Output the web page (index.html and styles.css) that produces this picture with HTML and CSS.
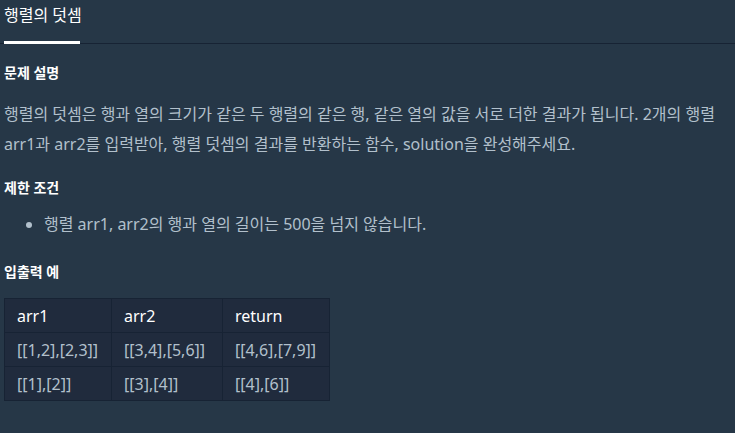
FILE: index.html
```html
<!DOCTYPE html>
<html lang="ko">
<head>
    <meta charset="UTF-8">
    <title>행렬의 덧셈</title>
    <link rel="stylesheet" href="styles.css">
</head>
<body>
    <div class="tabs">
        <div class="tab active">행렬의 덧셈</div>
    </div>
    <div class="guide">
        <h6>문제 설명</h6>
        <p>행렬의 덧셈은 행과 열의 크기가 같은 두 행렬의 같은 행, 같은 열의 값을 서로 더한 결과가 됩니다. 2개의 행렬 arr1과 arr2를 입력받아, 행렬 덧셈의 결과를 반환하는 함수, solution을 완성해주세요.</p>

        <h5>제한 조건</h5>
        <ul>
            <li>행렬 arr1, arr2의 행과 열의 길이는 500을 넘지 않습니다.</li>
        </ul>

        <h5>입출력 예</h5>
        <table>
            <colgroup>
                <col class="col-a">
                <col class="col-b">
                <col class="col-c">
            </colgroup>
            <thead>
                <tr>
                    <th>arr1</th>
                    <th>arr2</th>
                    <th>return</th>
                </tr>
            </thead>
            <tbody>
                <tr>
                    <td>[[1,2],[2,3]]</td>
                    <td>[[3,4],[5,6]]</td>
                    <td>[[4,6],[7,9]]</td>
                </tr>
                <tr>
                    <td>[[1],[2]]</td>
                    <td>[[3],[4]]</td>
                    <td>[[4],[6]]</td>
                </tr>
            </tbody>
        </table>
    </div>
</body>
</html>
```

FILE: styles.css
```css
body {
    margin: 0;
    padding: 0;
    background-color: #263747;
    color: #b2c0cc;
    font-family: 'Noto Sans', 'Noto Sans CJK KR', sans-serif;
    font-size: 16px;
}

.tabs {
    display: flex;
    border-bottom: 1px solid #172334;
    padding-left: 4px;
}

.tab {
    color: #fff;
    font-size: 16px;
    line-height: 20px;
    padding: 5px 0 16px;
    border-bottom: 3px solid #fff;
    margin-bottom: -1px;
    white-space: nowrap;
    width: 76px;
}

.guide {
    padding: 0 4px;
}

h5, h6 {
    color: #fff;
    font-size: 14px;
    font-weight: 700;
    margin: 0;
    line-height: 20px;
}

h6 {
    padding-top: 19px;
}

h5 {
    padding-top: 4px;
}

p {
    margin: 16px 0 15px;
    line-height: 30px;
}

ul {
    margin: 11px 0 19px;
    padding-left: 40px;
    line-height: 30px;
}

table {
    margin-top: 16px;
    border-collapse: collapse;
    table-layout: fixed;
    width: 325px;
    background-color: #202b3d;
    font-size: 16px;
}

.col-a {
    width: 107px;
}

.col-b {
    width: 111px;
}

.col-c {
    width: 107px;
}

th, td {
    border: 1px solid #172334;
    padding: 0 12px;
    height: 33px;
    text-align: left;
    font-weight: 400;
    white-space: nowrap;
}

th {
    color: #fff;
}
```
